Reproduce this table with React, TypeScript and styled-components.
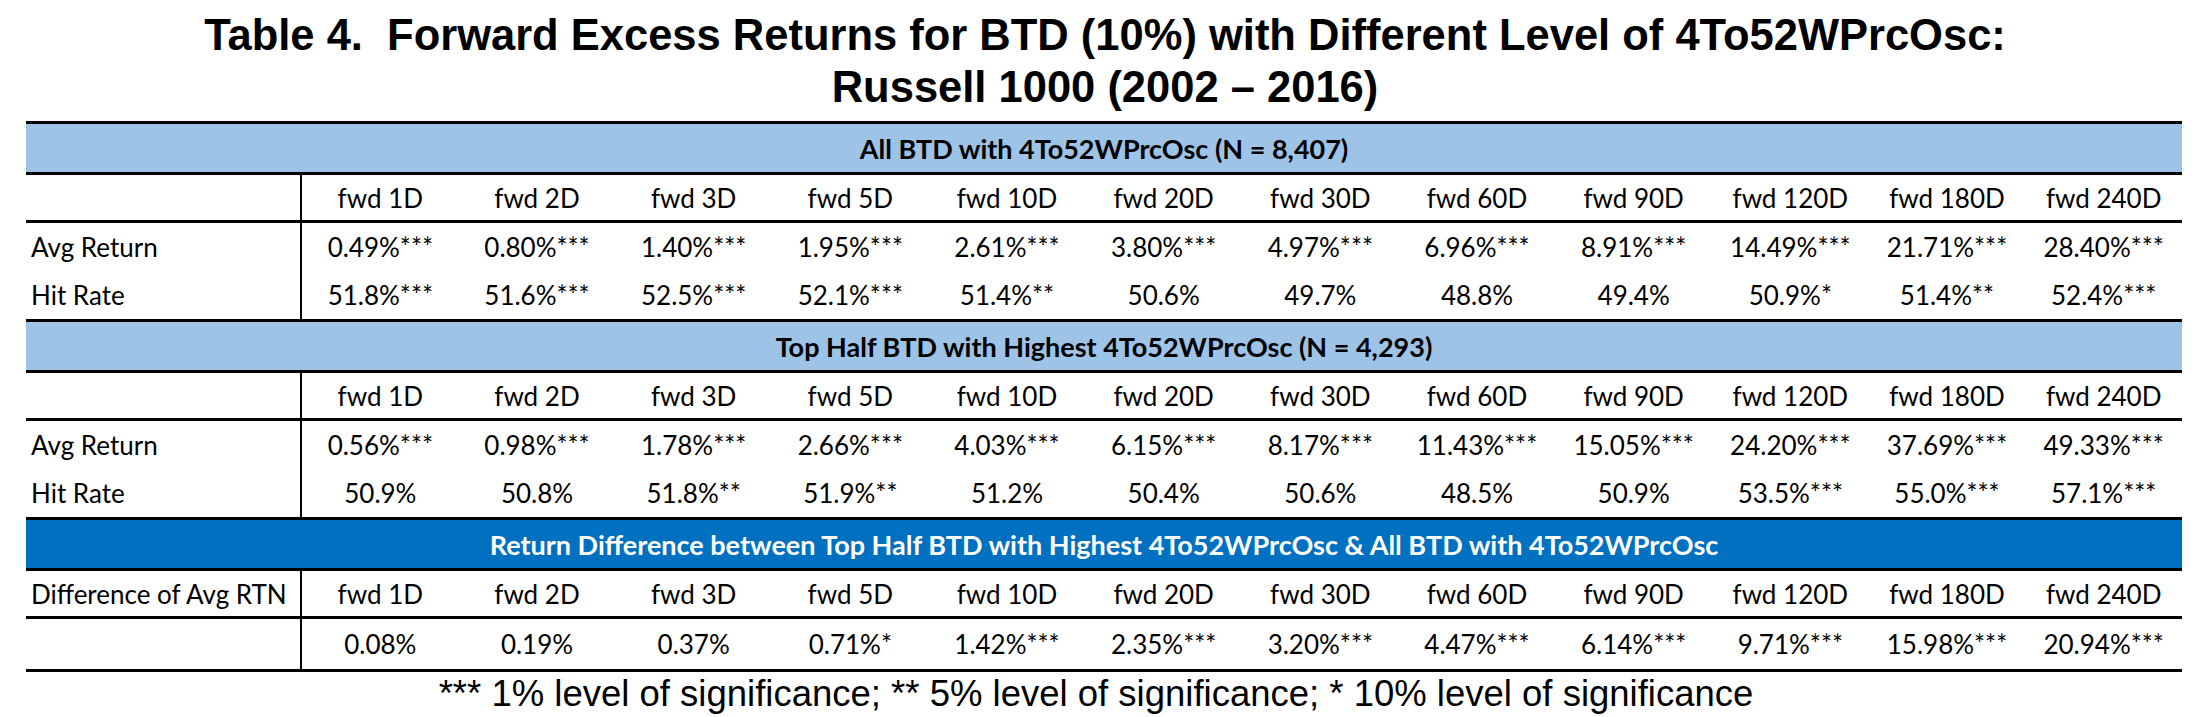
import React from "react";
import styled, { createGlobalStyle } from "styled-components";

const GlobalStyle = createGlobalStyle`
  html, body { margin: 0; padding: 0; background: #ffffff; }
  body { width: 2210px; }
`;

const Page = styled.div`
  width: 2210px;
  display: flex;
  flex-direction: column;
  align-items: center;
  padding-top: 9px;
`;

const Title = styled.h1`
  margin: 0;
  font-family: "Liberation Sans", Arial, sans-serif;
  font-weight: 700;
  font-size: 43.5px;
  line-height: 52px;
  text-align: center;
  color: #000;
  white-space: pre;
`;

const Table = styled.div`
  width: 2156px;
  margin-top: 8px;
  margin-left: -2px;
  font-family: Lato, "Open Sans", sans-serif;
  font-size: 26px;
  color: #000;
`;

const Band = styled.div<{ $dark?: boolean }>`
  height: 48px;
  border-top: 3px solid #000;
  border-bottom: 3px solid #000;
  background: ${(p) => (p.$dark ? "#0070c0" : "#9dc3e6")};
  color: ${(p) => (p.$dark ? "#ffffff" : "#000000")};
  font-weight: 700;
  font-size: 27px;
  display: flex;
  align-items: center;
  justify-content: center;
`;

const Row = styled.div<{ $h: number; $rule?: boolean }>`
  display: grid;
  grid-template-columns: 276px repeat(12, 1fr);
  height: ${(p) => p.$h}px;
  border-bottom: ${(p) => (p.$rule ? "3px solid #000" : "none")};
`;

const Label = styled.div`
  border-right: 2px solid #000;
  display: flex;
  align-items: center;
  padding-left: 5px;
  white-space: nowrap;
`;

const Cell = styled.div`
  display: flex;
  align-items: center;
  justify-content: center;
  white-space: nowrap;
`;

const Footnote = styled.p`
  margin: 1px 0 0;
  padding-right: 18px;
  font-family: "Liberation Sans", Arial, sans-serif;
  font-size: 36.5px;
  line-height: 42px;
  color: #000;
`;

const cols = [
  "fwd 1D", "fwd 2D", "fwd 3D", "fwd 5D", "fwd 10D", "fwd 20D",
  "fwd 30D", "fwd 60D", "fwd 90D", "fwd 120D", "fwd 180D", "fwd 240D",
];

type Section = {
  band: string;
  dark?: boolean;
  headLabel: string;
  rows: { label: string; values: string[] }[];
};

const sections: Section[] = [
  {
    band: "All BTD with 4To52WPrcOsc (N = 8,407)",
    headLabel: "",
    rows: [
      {
        label: "Avg Return",
        values: ["0.49%***", "0.80%***", "1.40%***", "1.95%***", "2.61%***", "3.80%***", "4.97%***", "6.96%***", "8.91%***", "14.49%***", "21.71%***", "28.40%***"],
      },
      {
        label: "Hit Rate",
        values: ["51.8%***", "51.6%***", "52.5%***", "52.1%***", "51.4%**", "50.6%", "49.7%", "48.8%", "49.4%", "50.9%*", "51.4%**", "52.4%***"],
      },
    ],
  },
  {
    band: "Top Half BTD with Highest 4To52WPrcOsc (N = 4,293)",
    headLabel: "",
    rows: [
      {
        label: "Avg Return",
        values: ["0.56%***", "0.98%***", "1.78%***", "2.66%***", "4.03%***", "6.15%***", "8.17%***", "11.43%***", "15.05%***", "24.20%***", "37.69%***", "49.33%***"],
      },
      {
        label: "Hit Rate",
        values: ["50.9%", "50.8%", "51.8%**", "51.9%**", "51.2%", "50.4%", "50.6%", "48.5%", "50.9%", "53.5%***", "55.0%***", "57.1%***"],
      },
    ],
  },
  {
    band: "Return Difference between Top Half BTD with Highest 4To52WPrcOsc & All BTD with 4To52WPrcOsc",
    dark: true,
    headLabel: "Difference of Avg RTN",
    rows: [
      {
        label: "",
        values: ["0.08%", "0.19%", "0.37%", "0.71%*", "1.42%***", "2.35%***", "3.20%***", "4.47%***", "6.14%***", "9.71%***", "15.98%***", "20.94%***"],
      },
    ],
  },
];

export default function App() {
  return (
    <>
      <GlobalStyle />
      <Page>
        <Title>{"Table 4.  Forward Excess Returns for BTD (10%) with Different Level of 4To52WPrcOsc:\nRussell 1000 (2002 \u2013 2016)"}</Title>
        <Table>
          {sections.map((s, si) => {
            const last = si === sections.length - 1;
            return (
              <React.Fragment key={s.band}>
                <Band $dark={s.dark}>{s.band}</Band>
                <Row $h={45} $rule>
                  <Label>{s.headLabel}</Label>
                  {cols.map((c) => (
                    <Cell key={c}>{c}</Cell>
                  ))}
                </Row>
                {s.rows.map((r, ri) => (
                  <Row
                    key={ri}
                    $h={last ? 50 : 48}
                    $rule={last && ri === s.rows.length - 1}
                  >
                    <Label>{r.label}</Label>
                    {r.values.map((v, vi) => (
                      <Cell key={vi}>{v}</Cell>
                    ))}
                  </Row>
                ))}
              </React.Fragment>
            );
          })}
        </Table>
        <Footnote>*** 1% level of significance; ** 5% level of significance; * 10% level of significance</Footnote>
      </Page>
    </>
  );
}
